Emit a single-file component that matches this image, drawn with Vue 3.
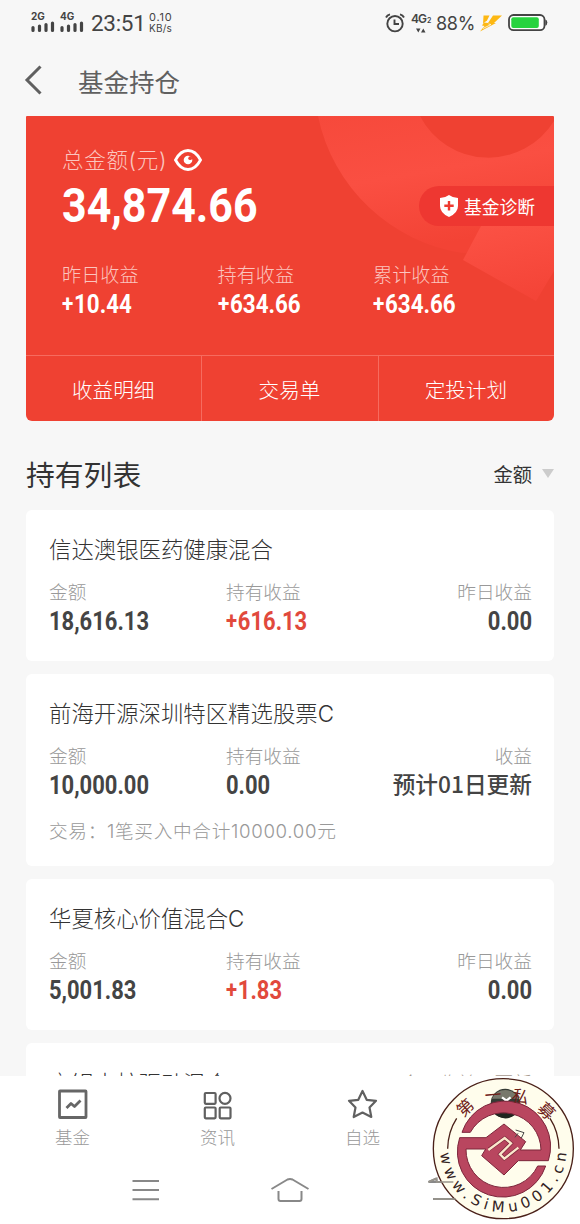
<template>
    <div class="page">
        <div class="status">
            <div class="sim" v-for="net in ['2G', '4G']" :key="net">
                <b>{{ net }}</b>
                <svg width="24" height="12" viewBox="0 0 24 12">
                    <path d="M2 6.5V9.500M8.500 5V9.500M15 3.500V9.500M21.500 2V9.500" stroke="#444" stroke-width="3.200" stroke-linecap="round" />
                </svg>
            </div>
            <span class="time">23:51</span>
            <div class="speed"><span>0.10</span><span>KB/s</span></div>
            <div class="right">
                <svg width="20" height="20" viewBox="0 0 20 20" fill="none" stroke="#444" stroke-width="1.900">
                    <circle cx="10" cy="10.700" r="7.700" />
                    <path d="M9.500 6.500V11H14M1 4.500Q2.200 2 5 1.300M15 1.300Q17.800 2 19 4.500" />
                </svg>
                <div class="data">
                    <div><b>4G</b><i>2</i></div>
                    <svg width="10" height="5" viewBox="0 0 10 5"><path d="M0 .5H4.500L2.300 4.500ZM5 4.500H9.500L7.300 .5Z" fill="#444" /></svg>
                </div>
                <span class="percent">88%</span>
                <svg class="bolt" width="22" height="17" viewBox="0 0 22 17">
                    <path d="M3.500 .5H9.500L7 5.500L3 8.500Z" fill="#fdb813" />
                    <path d="M13 .5H22L14 8H16L0 16.500L4.500 11L2 10.500L4 7.500L8 8Z" fill="#fdb813" />
                    <path d="M3 13.500L11 9.500L8.500 9" fill="none" stroke="#f7f7f7" stroke-width=".8" />
                </svg>
                <svg class="battery" width="40" height="18" viewBox="0 0 40 18">
                    <rect x="1" y="1" width="35.500" height="15.200" rx="4.500" fill="#fff" stroke="#444" stroke-width="1.800" />
                    <rect x="3.300" y="3.200" width="27.500" height="10.800" rx="2" fill="#27d33f" />
                    <path d="M37.300 5.500Q39.300 6 39.300 8.600T37.300 11.700Z" fill="#444" />
                </svg>
            </div>
        </div>
        <div class="header">
            <svg width="20" height="30" viewBox="0 0 20 30"><path d="M17.500 1.500L4 15L17.500 28.500" fill="none" stroke="#606060" stroke-width="3" /></svg>
            <span>基金持仓</span>
        </div>
        <div class="hero">
            <svg class="ring" width="528" height="240" viewBox="0 0 528 240">
                <defs>
                    <linearGradient id="ringFill" x1="0" y1="0" x2="0.300" y2="1">
                        <stop offset="0" stop-color="#f6493b" />
                        <stop offset="0.500" stop-color="#fa4f42" />
                        <stop offset="1" stop-color="#f34335" />
                    </linearGradient>
                    <linearGradient id="tailFill" x1="0.300" y1="0" x2="0.600" y2="1">
                        <stop offset="0" stop-color="#fb5144" />
                        <stop offset="1" stop-color="#f44437" />
                    </linearGradient>
                </defs>
                <path d="M292 0A174 174 0 0 0 437 137L528 130V5A77 77 0 0 1 394 0Z" fill="url(#ringFill)" />
                <path d="M455 110L437 144L510 185L528 155V110Z" fill="url(#tailFill)" />
            </svg>
            <div class="diagnose">
                <svg width="20" height="22" viewBox="0 0 20 22">
                    <path d="M10 0Q14 3 19 3V11Q19 18 10 22Q1 18 1 11V3Q6 3 10 0Z" fill="#fff" />
                    <path d="M10 6V15.500M5.300 10.700H14.700" stroke="#ee3a31" stroke-width="2.400" />
                </svg>
                <span>基金诊断</span>
            </div>
            <div class="summary">
                <div class="total-label">
                    <span>总金额(元)</span>
                    <svg width="28" height="22" viewBox="0 0 28 22">
                        <path d="M1.500 11Q6.500 1.500 14 1.500T26.500 11Q21.500 20.500 14 20.500T1.500 11Z" fill="none" stroke="#fff" stroke-width="2.800" />
                        <circle cx="14" cy="11" r="4.300" fill="#fff" />
                        <circle cx="16.200" cy="9.200" r="1.900" fill="#ef4132" />
                    </svg>
                </div>
                <div class="total num">34,874.66</div>
                <div class="stats">
                    <div v-for="item in stats" :key="item.label">
                        <p>{{ item.label }}</p>
                        <div class="num value"><small>+</small>{{ item.value }}</div>
                    </div>
                </div>
            </div>
            <div class="actions">
                <div v-for="name in ['收益明细', '交易单', '定投计划']" :key="name">{{ name }}</div>
            </div>
        </div>
        <div class="list-title">
            <h2>持有列表</h2>
            <span>金额</span>
            <i class="arrow"></i>
        </div>
        <div class="list">
            <div class="card" v-for="fund in funds" :key="fund.name">
                <div class="name">
                    <span>{{ fund.name }}</span>
                    <em v-if="fund.tip">{{ fund.tip }}</em>
                </div>
                <div class="cols">
                    <div>
                        <p>金额</p>
                        <div class="num value">{{ fund.amount }}</div>
                    </div>
                    <div>
                        <p>持有收益</p>
                        <div class="num value" :class="{ red: fund.up }"><small v-if="fund.up">+</small>{{ fund.profit }}</div>
                    </div>
                    <div class="last">
                        <p>{{ fund.label }}</p>
                        <div v-if="fund.update" class="update">{{ fund.update }}</div>
                        <div v-else class="num value">0.00</div>
                    </div>
                </div>
                <div class="trade" v-if="fund.trade">{{ fund.trade }}</div>
            </div>
        </div>
        <div class="bottom">
            <div class="tabs">
                <div>
                    <svg width="32" height="32" viewBox="0 0 32 32" fill="none" stroke="#666" stroke-width="2.800" stroke-linejoin="round">
                        <rect x="2.500" y="3" width="26.500" height="26.500" rx="0.500" />
                        <path d="M9.500 20L14 15.500L17.500 18.500L23.500 12.500" stroke-width="2.800" />
                    </svg>
                    <span>基金</span>
                </div>
                <div>
                    <svg width="32" height="32" viewBox="0 0 32 32" fill="none" stroke="#606060" stroke-width="2.200">
                        <rect x="2.800" y="5" width="10.800" height="10.800" rx="1" />
                        <circle cx="23" cy="10.300" r="5.500" />
                        <rect x="2.800" y="19.500" width="10.800" height="10.800" rx="1" />
                        <rect x="17.700" y="19.500" width="10.800" height="10.800" rx="1" />
                    </svg>
                    <span>资讯</span>
                </div>
                <div>
                    <svg width="32" height="32" viewBox="0 0 32 32" fill="none" stroke="#606060" stroke-width="2.200" stroke-linejoin="round">
                        <path d="M15.500 3L19.700 11.800L29 12.800L22.500 19.500L24.300 29L15.500 24.500L6.700 29L8.500 19.500L2 12.800L11.300 11.800Z" />
                    </svg>
                    <span>自选</span>
                </div>
            </div>
            <div class="keys">
                <svg width="40" height="28" viewBox="0 0 40 28" fill="none" stroke="#888" stroke-width="2"><path d="M6.500 5H33M6.500 14H33M6.500 23.200H33" /></svg>
                <svg width="40" height="28" viewBox="0 0 40 28" fill="none" stroke="#888" stroke-width="2" stroke-linejoin="round">
                    <path d="M1.500 13L17.500 3.500Q20 2.300 22.500 3.500L38.500 13M8.500 15V23Q8.500 25 10.500 25H29.500Q31.500 25 31.500 23V15" />
                </svg>
                <svg width="40" height="28" viewBox="0 0 40 28" fill="none" stroke="#888" stroke-width="2"><path d="M12.500 2.500V6H29M4.500 6L12.500 2.500M4.500 6H12.500M9 23H32" /></svg>
            </div>
        </div>
        <svg class="seal" width="155" height="154" viewBox="0 0 465 462">
            <defs>
                <path id="sealBottom" d="M45 236A190 190 0 0 0 425 236" />
            </defs>
            <circle cx="235" cy="236" r="210" fill="#fffdec" stroke="#4a2018" stroke-width="4" />
            <path d="M10 336L35 325V336H85M25 387H92" fill="none" stroke="#99958c" stroke-width="5" />
            <circle cx="241" cy="100" r="44" fill="#343a34" />
            <path d="M201 86A44 44 0 0 1 281 86Z" fill="#77786c" />
            <path d="M204 125A44 44 0 0 0 278 125Z" fill="#20251f" />
            <path d="M231 82L257 101M257 82L231 101" stroke="#fff" stroke-width="7" />
            <path d="M68 236Q69 185 95 145M402 236Q401 185 375 145" fill="none" stroke="#4a2018" stroke-width="4" />
            <path
                d="M111 187A135.500 135.500 0 0 1 370 272H280L237 315L170 257L182 237H123A113 113 0 0 0 338 288H362A135.500 135.500 0 0 1 104 203H183L237 162L302 215L286 240H348A113 113 0 0 0 136 187Z"
                fill="#b9465f" stroke="#7c263b" stroke-width="3" stroke-linejoin="round"
            />
            <path d="M192 238L239 204L258 220L225 253L238 266L278 235" fill="none" stroke="#7c263b" stroke-width="11" />
            <path d="M190 240L239 204L258 220L225 253L238 266L280 233" fill="none" stroke="#fbe8cc" stroke-width="7" />
            <path d="M272 180L297 188L289 204M279 190L270 202" fill="none" stroke="#474747" stroke-width="3" />
            <g class="seal-cn">
                <text x="-25" y="18" transform="translate(121 113) rotate(-43)">第</text>
                <text x="-25" y="18" transform="translate(204 75) rotate(-5)">一</text>
                <text x="-25" y="18" transform="translate(286 80) rotate(12)">私</text>
                <text x="-25" y="18" transform="translate(364 123) rotate(43)">募</text>
            </g>
            <text class="seal-en"><textPath href="#sealBottom" startOffset="14" textLength="570">www.SiMu001.cn</textPath></text>
        </svg>
    </div>
</template>
<script setup>
const stats = [
    { label: '昨日收益', value: '10.44' },
    { label: '持有收益', value: '634.66' },
    { label: '累计收益', value: '634.66' }
]

const funds = [
    { name: '信达澳银医药健康混合', amount: '18,616.13', profit: '616.13', up: true, label: '昨日收益' },
    {
        name: '前海开源深圳特区精选股票C',
        amount: '10,000.00',
        profit: '0.00',
        label: '收益',
        update: '预计01日更新',
        trade: '交易：1笔买入中合计10000.00元'
    },
    { name: '华夏核心价值混合C', amount: '5,001.83', profit: '1.83', up: true, label: '昨日收益' },
    { name: '交银内核驱动混合', tip: '今日收益已更新', amount: '0.00', profit: '0.00', label: '昨日收益' }
]
</script>
<style>
body {
    margin: 0;
    background: #f7f7f7;
}
</style>
<style scoped>
.page {
    position: relative;
    width: 580px;
    height: 1224px;
    overflow: hidden;
    background: #f7f7f7;
    color: #333;
    font-family: Inter, "Noto Sans CJK SC", sans-serif;
    font-weight: 300;
    display: flex;
    flex-direction: column;
}

p,
h2 {
    margin: 0;
    font-weight: inherit;
}

svg {
    display: block;
    flex-shrink: 0;
}

.num {
    font-family: Roboto, "Noto Sans CJK SC", sans-serif;
    font-weight: 700;
    transform-origin: left center;
    white-space: nowrap;
}

.value {
    font-size: 26px;
    line-height: 30px;
    transform: scaleX(.845);
}

.value small {
    display: inline-block;
    width: 14px;
    font-size: 24px;
    vertical-align: 1px;
}

.status {
    height: 46px;
    padding: 0 32px 0 31px;
    box-sizing: border-box;
    display: flex;
    align-items: center;
    color: #444;
    flex-shrink: 0;
}

.sim {
    width: 29px;
    height: 22px;
}

.sim b {
    display: block;
    font-size: 10px;
    line-height: 9px;
    font-weight: 700;
}

.time {
    width: 58px;
    margin-left: 2px;
    font-family: Roboto, sans-serif;
    font-size: 22.500px;
    font-weight: 400;
    letter-spacing: -.3px;
}

.speed {
    display: flex;
    flex-direction: column;
    font-size: 11px;
    line-height: 11px;
    font-weight: 400;
    letter-spacing: .8px;
}

.speed span + span {
    font-size: 10px;
    letter-spacing: .2px;
}

.right {
    margin-left: auto;
    display: flex;
    align-items: center;
}

.data {
    width: 20px;
    margin-left: 6px;
    font-size: 12px;
    line-height: 12px;
    letter-spacing: -1px;
}

.data b {
    font-weight: 600;
}

.data i {
    font-style: normal;
    font-size: 7px;
    font-weight: 600;
    margin-left: 1px;
}

.data svg {
    margin: 1px 0 0 5px;
}

.percent {
    margin-left: 5px;
    width: 41px;
    font-size: 18px;
    font-weight: 400;
    letter-spacing: -.3px;
}

.bolt {
    margin-left: 3px;
}

.battery {
    margin-left: 6px;
}

.header {
    height: 70px;
    padding: 0 0 2px 23px;
    box-sizing: border-box;
    display: flex;
    align-items: center;
    color: #606060;
    font-size: 25.500px;
    font-weight: 400;
    flex-shrink: 0;
}

.header span {
    margin-left: 35px;
}

.hero {
    position: relative;
    width: 528px;
    height: 305px;
    margin: 0 26px;
    background: #ef4132;
    border-radius: 1px 1px 6px 6px;
    overflow: hidden;
    color: #fff;
    display: flex;
    flex-direction: column;
    flex-shrink: 0;
}

.ring {
    position: absolute;
    top: 0;
    left: 0;
}

.diagnose {
    position: absolute;
    top: 70px;
    right: 0;
    width: 135px;
    height: 40px;
    padding-left: 20px;
    box-sizing: border-box;
    border-radius: 20px 0 0 20px;
    background: #ee3731;
    display: flex;
    align-items: center;
    font-size: 17.800px;
    font-weight: 400;
}

.diagnose span {
    margin-left: 5px;
}

.summary {
    position: relative;
    height: 239px;
    padding: 29px 0 0 36px;
    box-sizing: border-box;
}

.total-label {
    height: 30px;
    display: flex;
    align-items: center;
    font-size: 21.500px;
    line-height: 30px;
    color: #fbc5bf;
}

.total-label span {
    width: 105px;
    letter-spacing: .7px;
    white-space: nowrap;
}

.total-label svg {
    margin-left: 7px;
}

.total {
    height: 57px;
    font-size: 48px;
    line-height: 61px;
    transform: scaleX(.895);
}

.stats {
    display: flex;
    margin-top: 27px;
}

.stats > div {
    width: 155.500px;
    flex-shrink: 0;
}

.stats p {
    font-size: 19.200px;
    line-height: 32px;
    height: 30px;
    color: #fbc5bf;
}

.stats .value {
    line-height: 31px;
    transform: scaleX(.86);
}

.actions {
    flex: 1;
    display: flex;
    border-top: 1.500px solid #f66b5f;
    position: relative;
}

.actions > div {
    flex: 1;
    display: flex;
    align-items: center;
    justify-content: center;
    font-size: 20.600px;
    padding: 1px 1px 0 0;
}

.actions > div + div {
    border-left: 1px solid #f66b5f;
}

.list-title {
    height: 88px;
    padding: 17px 26px 0;
    display: flex;
    align-items: center;
    box-sizing: border-box;
    flex-shrink: 0;
}

.list-title h2 {
    flex: 1;
    font-size: 28.800px;
    font-weight: 400;
}

.list-title span {
    font-size: 19.300px;
    font-weight: 400;
}

.arrow {
    margin-left: 10px;
    border: 6.500px solid transparent;
    border-top: 9px solid #ccc;
    border-bottom: 0;
}

.list {
    flex: 1;
    min-height: 0;
    overflow: hidden;
    padding: .5px 26px 0;
    display: flex;
    flex-direction: column;
    gap: 13px;
}

.card {
    min-height: 151px;
    padding: 24px 22px 24px 23px;
    box-sizing: border-box;
    background: #fff;
    border-radius: 6px;
    flex-shrink: 0;
}

.name {
    display: flex;
    justify-content: space-between;
    height: 42px;
    line-height: 31px;
    font-size: 22.400px;
}

.card:last-child .name {
    line-height: 34px;
}

.name em {
    font-style: normal;
    font-size: 18.700px;
    color: #a89a90;
}

.cols {
    display: flex;
}

.cols > div {
    width: 177px;
    flex-shrink: 0;
}

.cols p {
    font-size: 18.700px;
    line-height: 33px;
    height: 30px;
    color: #999;
}

.cols .value {
    color: #444;
}

.cols .value.red {
    color: #e1493c;
}

.cols .last {
    width: 129px;
    text-align: right;
}

.last .num {
    transform-origin: right center;
}

.update {
    display: flex;
    justify-content: flex-end;
    font-family: "Noto Sans CJK SC", sans-serif;
    font-size: 22.700px;
    line-height: 28px;
    height: 30px;
    font-weight: 500;
    color: #444;
    white-space: nowrap;
}

.trade {
    margin-top: 15px;
    font-size: 18.700px;
    line-height: 33px;
    height: 27px;
    color: #999;
    letter-spacing: .65px;
    white-space: nowrap;
}

.bottom {
    height: 148px;
    background: #fff;
    flex-shrink: 0;
}

.tabs {
    height: 84px;
    display: flex;
}

.tabs > div {
    width: 145px;
    padding-top: 12px;
    display: flex;
    flex-direction: column;
    align-items: center;
}

.tabs span {
    margin-top: 5px;
    font-size: 17.500px;
    line-height: 26px;
    color: #999;
}

.keys {
    height: 60px;
    padding-left: 126px;
    display: flex;
    align-items: center;
}

.keys svg + svg {
    margin-left: 104px;
}

.keys svg:last-child {
    margin-left: 114px;
}

.seal {
    position: absolute;
    left: 425px;
    top: 1070px;
}

.seal-cn {
    font-size: 50px;
    font-weight: 400;
    fill: #6e2018;
}

.seal-en {
    font-family: "DejaVu Sans", sans-serif;
    font-size: 45px;
    font-weight: 400;
    fill: #33231f;
}
</style>
